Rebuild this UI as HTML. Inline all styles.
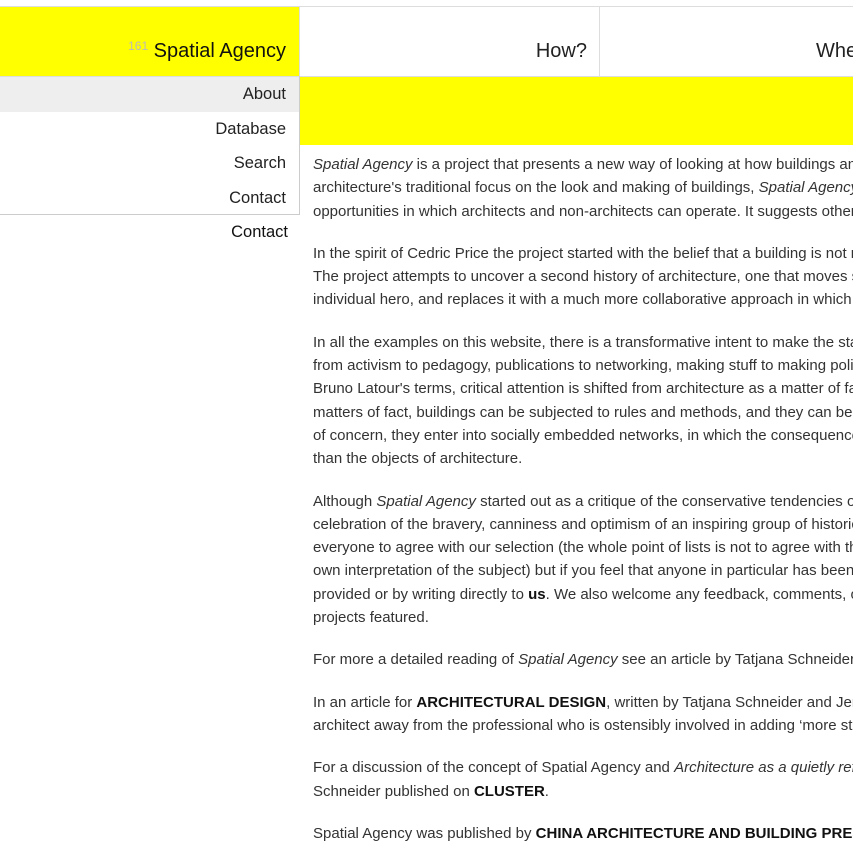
<!DOCTYPE html>
<html><head><meta charset="utf-8"><style>
*{margin:0;padding:0;box-sizing:border-box}
body{width:853px;height:853px;overflow:hidden;background:#fff;font-family:"Liberation Sans",Arial,sans-serif;color:#333;position:relative}
.top{position:absolute;left:0;top:6px;width:853px;height:1px;background:#ddd}
.logo{position:absolute;left:0;top:7px;width:299px;height:69px;background:#ff0;text-align:right;padding-right:13px;padding-top:32px;font-size:20px;color:#111;overflow:hidden}
.logo sup{font-size:12px;color:#bbb;vertical-align:7px}
.nav{position:absolute;top:7px;height:69px;border-left:1px solid #ddd;text-align:right;font-size:20px;color:#222;padding-top:33px;padding-right:13px;white-space:nowrap;overflow:hidden}
.navline{position:absolute;left:299px;top:76px;width:554px;height:1px;background:#ddd}
.ybar{position:absolute;left:300px;top:77px;width:553px;height:68px;background:#ff0}
.menu{position:absolute;left:0;top:76px;width:300px;height:139px;border-right:1px solid #ccc;border-bottom:1px solid #ccc;border-top:1px solid #ddd}
.menu div{height:34.5px;line-height:34px;text-align:right;padding-right:13px;font-size:16.5px;color:#222}
.menu .a{background:#eee}
.c2{position:absolute;left:0;top:223px;width:300px;text-align:right;padding-right:12px;font-size:16.5px;color:#111}
.txt{position:absolute;left:313px;top:153px;width:540px;height:700px;overflow:hidden;font-size:15px;line-height:23.3px;white-space:nowrap}
.txt p{margin-bottom:19px}
b{color:#111}
</style></head><body>
<div class="top"></div>
<div class="logo"><sup>161</sup> Spatial Agency</div>
<div class="nav" style="left:299px;width:301px">How?</div>
<div class="nav" style="left:599px;width:254px;text-align:left;padding-left:216px">Where?</div>
<div class="navline"></div>
<div class="ybar"></div>
<div class="menu"><div class="a">About</div><div>Database</div><div>Search</div><div>Contact</div></div>
<div class="c2">Contact</div>
<div class="txt">
<p><i>Spatial Agency</i> is a project that presents a new way of looking at how buildings and<br>architecture's traditional focus on the look and making of buildings, <i>Spatial Agency</i> proposes<br>opportunities in which architects and non-architects can operate. It suggests other</p>
<p>In the spirit of Cedric Price the project started with the belief that a building is not necessarily<br>The project attempts to uncover a second history of architecture, one that moves so<br>individual hero, and replaces it with a much more collaborative approach in which</p>
<p>In all the examples on this website, there is a transformative intent to make the state<br>from activism to pedagogy, publications to networking, making stuff to making policy<br>Bruno Latour's terms, critical attention is shifted from architecture as a matter of fact<br>matters of fact, buildings can be subjected to rules and methods, and they can be<br>of concern, they enter into socially embedded networks, in which the consequences<br>than the objects of architecture.</p>
<p>Although <i>Spatial Agency</i> started out as a critique of the conservative tendencies of<br>celebration of the bravery, canniness and optimism of an inspiring group of historic<br>everyone to agree with our selection (the whole point of lists is not to agree with them<br>own interpretation of the subject) but if you feel that anyone in particular has been<br>provided or by writing directly to <b>us</b>. We also welcome any feedback, comments, or<br>projects featured.</p>
<p>For more a detailed reading of <i>Spatial Agency</i> see an article by Tatjana Schneider and</p>
<p>In an article for <b>ARCHITECTURAL DESIGN</b>, written by Tatjana Schneider and Jeremy<br>architect away from the professional who is ostensibly involved in adding ‘more stuff</p>
<p>For a discussion of the concept of Spatial Agency and <i>Architecture as a quietly reflective</i><br>Schneider published on <b>CLUSTER</b>.</p>
<p>Spatial Agency was published by <b>CHINA ARCHITECTURE AND BUILDING PRESS</b></p>
</div>
</body></html>
